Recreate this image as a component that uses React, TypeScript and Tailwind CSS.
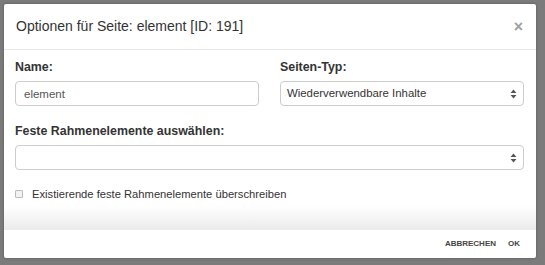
import React from 'react';

const SelectArrows: React.FC = () => (
  <svg width="7" height="10" viewBox="0 0 7 10" className="absolute right-[6px] top-1/2 -translate-y-1/2">
    <path d="M3.5 0.5 L6.5 4 H0.5 Z" fill="#555" />
    <path d="M3.5 9.5 L6.5 6 H0.5 Z" fill="#555" />
  </svg>
);

const App: React.FC = () => {
  return (
    <div
      className="w-[545px] h-[265px] bg-[#7b7b7b] p-[4px] pr-[9px] pb-[7px] overflow-hidden"
      style={{ fontFamily: '"Liberation Sans", Arial, sans-serif' }}
    >
      <div className="w-[532px] h-[254px] bg-white rounded-[2px] flex flex-col overflow-hidden shadow-[0_0_3px_rgba(0,0,0,0.3)]">
        {/* header */}
        <div className="h-[46px] flex items-center justify-between pl-[12px] pr-[13px] border-b border-[#e8e8e8] shrink-0">
          <h4 className="text-[14px] text-[#333]">Optionen für Seite: element [ID: 191]</h4>
          <span className="text-[16px] font-bold text-[#a0a0a0] leading-none">×</span>
        </div>

        {/* body */}
        <div className="pl-[11px] pr-[12px] pt-[10px] flex-1">
          <div className="grid grid-cols-2 gap-x-[21px]">
            <div>
              <label className="block text-[12.4px] font-bold text-[#333] leading-[14px]">Name:</label>
              <input
                readOnly
                value="element"
                className="mt-[7px] w-full h-[25px] border border-[#ccc] rounded-[4px] px-[8px] text-[11.5px] text-[#555] outline-none"
              />
            </div>
            <div>
              <label className="block text-[12.4px] font-bold text-[#333] leading-[14px]">Seiten-Typ:</label>
              <div className="relative mt-[7px] h-[25px] border border-[#ccc] rounded-[4px] px-[6px] flex items-center text-[11.4px] text-[#333]">
                Wiederverwendbare Inhalte
                <SelectArrows />
              </div>
            </div>
          </div>

          <label className="block mt-[18px] text-[12.4px] font-bold text-[#333] leading-[14px]">
            Feste Rahmenelemente auswählen:
          </label>
          <div className="relative mt-[7px] h-[25px] border border-[#ccc] rounded-[4px]">
            <SelectArrows />
          </div>

          <div className="flex items-center mt-[17px] h-[14px]">
            <span className="w-[8px] h-[8px] border border-[#bbb] bg-[#f2f2f2] rounded-[1px] mr-[9px]" />
            <span className="text-[11.2px] text-[#333]">Existierende feste Rahmenelemente überschreiben</span>
          </div>
        </div>

        <div className="h-[24px] bg-gradient-to-b from-white to-[#ebebeb] shrink-0" />

        {/* footer */}
        <div className="h-[28px] flex items-center justify-end gap-[12px] pr-[16px] shrink-0">
          <button className="text-[8px] font-bold text-[#444]">ABBRECHEN</button>
          <button className="text-[8px] font-bold text-[#444]">OK</button>
        </div>
      </div>
    </div>
  );
};

export default App;
